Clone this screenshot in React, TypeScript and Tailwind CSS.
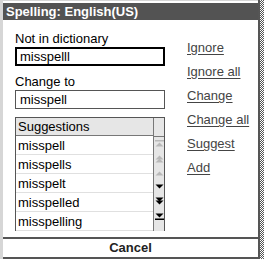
import React from "react";

function Tri({ up, color }: { up: boolean; color: string }) {
  return up ? (
    <polygon points="0.5,4.5 4.5,0.5 8.5,4.5" fill={color} />
  ) : (
    <polygon points="0.5,0.5 8.5,0.5 4.5,4.5" fill={color} />
  );
}

function ScrollIcon({ kind }: { kind: number }) {
  const grey = "#b9b9b9";
  const black = "#000";
  if (kind === 0)
    return (
      <svg width="9" height="7" viewBox="0 0 9 7">
        <rect x="0" y="0" width="9" height="1.5" fill={grey} />
        <g transform="translate(0,2)"><Tri up color={grey} /></g>
      </svg>
    );
  if (kind === 1)
    return (
      <svg width="9" height="8" viewBox="0 0 9 8">
        <Tri up color={grey} />
        <g transform="translate(0,3)"><Tri up color={grey} /></g>
      </svg>
    );
  if (kind === 2)
    return (
      <svg width="9" height="5" viewBox="0 0 9 5">
        <Tri up color={grey} />
      </svg>
    );
  if (kind === 3)
    return (
      <svg width="9" height="5" viewBox="0 0 9 5">
        <Tri up={false} color={black} />
      </svg>
    );
  if (kind === 4)
    return (
      <svg width="9" height="8" viewBox="0 0 9 8">
        <Tri up={false} color={black} />
        <g transform="translate(0,3)"><Tri up={false} color={black} /></g>
      </svg>
    );
  return (
    <svg width="9" height="7" viewBox="0 0 9 7">
      <Tri up={false} color={black} />
      <rect x="0" y="5.5" width="9" height="1.5" fill={black} />
    </svg>
  );
}

export default function App() {
  const words = ["misspell", "misspells", "misspelt", "misspelled", "misspelling"];
  const links = ["Ignore", "Ignore all", "Change", "Change all", "Suggest", "Add"];
  return (
    <div className="w-[264px] h-[259px] bg-white flex font-['Liberation_Sans',Arial,sans-serif] text-[13px] text-black overflow-hidden">
      <div className="w-[258px] flex flex-col border-l-[3px] border-t border-[#d6d6d6]">
        <div className="mt-[2px] h-[17px] bg-[#535353] text-white font-bold text-[13px] leading-[17px] pl-[3px]">
          Spelling: English(US)
        </div>
        <div className="flex-1 flex pt-[11px] pl-[12px]">
          <div className="w-[150px] flex flex-col">
            <div className="leading-[16px]">Not in dictionary</div>
            <div className="h-[19px] border-2 border-black leading-[15px] pl-[3px]">misspelll</div>
            <div className="leading-[16px] mt-[8px]">Change to</div>
            <div className="h-[19px] border border-[#555] leading-[17px] pl-[4px]">misspell</div>
            <div className="mt-[8px] h-[114px] border-l border-t border-r border-[#555] flex overflow-hidden">
              <div className="flex-1 flex flex-col">
                <div className="h-[18px] bg-[#e6e6e6] border-b border-[#777] leading-[18px] pl-[2px] shrink-0">Suggestions</div>
                {words.map((w) => (
                  <div key={w} className="h-[19px] shrink-0 border-b border-[#e0e0e0] leading-[19px] pl-[2px]">
                    {w}
                  </div>
                ))}
              </div>
              <div className="w-[11px] bg-[#e6e6e6] border-l border-[#777] flex flex-col items-center">
                <div className="h-[19px] w-full border-b border-[#777] shrink-0" />
                <div className="flex flex-col items-center gap-[8px] pt-[3px]">
                  {[0, 1, 2, 3, 4, 5].map((k) => (
                    <ScrollIcon key={k} kind={k} />
                  ))}
                </div>
              </div>
            </div>
          </div>
          <div className="ml-[22px] flex flex-col pt-[9px] gap-[8px]">
            {links.map((l) => (
              <div key={l} className="leading-[16px] text-[#444] underline underline-offset-2">
                {l}
              </div>
            ))}
          </div>
        </div>
        <div className="h-[2px] bg-[#555]" />
        <div className="h-[18px] text-center font-bold leading-[18px] text-[#222]">Cancel</div>
        <div className="h-[2px] bg-[#555]" />
      </div>
      <div className="w-[2px] bg-[#555]" />
      <div className="w-[4px] bg-[repeating-conic-gradient(#555_0%_25%,#fff_0%_50%)] bg-[length:2px_2px]" />
    </div>
  );
}
